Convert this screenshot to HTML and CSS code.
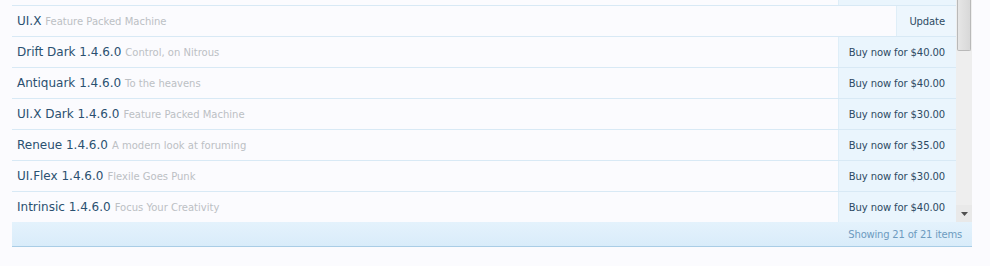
FILE: index.html
```html
<!DOCTYPE html>
<html>
<head>
<meta charset="utf-8">
<link rel="stylesheet" href="styles.css">
</head>
<body>
<div class="panel">
  <div class="viewport">
    <div class="list">
      <div class="row">
        <div class="info"></div>
        <div class="action buy blank"></div>
      </div>
      <div class="row">
        <div class="info"><span class="title">UI.X</span><span class="desc">Feature Packed Machine</span></div>
        <div class="action update">Update</div>
      </div>
      <div class="row">
        <div class="info"><span class="title">Drift Dark 1.4.6.0</span><span class="desc">Control, on Nitrous</span></div>
        <div class="action buy">Buy now for $40.00</div>
      </div>
      <div class="row">
        <div class="info"><span class="title">Antiquark 1.4.6.0</span><span class="desc">To the heavens</span></div>
        <div class="action buy">Buy now for $40.00</div>
      </div>
      <div class="row">
        <div class="info"><span class="title">UI.X Dark 1.4.6.0</span><span class="desc">Feature Packed Machine</span></div>
        <div class="action buy">Buy now for $30.00</div>
      </div>
      <div class="row">
        <div class="info"><span class="title">Reneue 1.4.6.0</span><span class="desc">A modern look at foruming</span></div>
        <div class="action buy">Buy now for $35.00</div>
      </div>
      <div class="row">
        <div class="info"><span class="title">UI.Flex 1.4.6.0</span><span class="desc">Flexile Goes Punk</span></div>
        <div class="action buy">Buy now for $30.00</div>
      </div>
      <div class="row">
        <div class="info"><span class="title">Intrinsic 1.4.6.0</span><span class="desc">Focus Your Creativity</span></div>
        <div class="action buy">Buy now for $40.00</div>
      </div>
    </div>
    <div class="scrollbar">
      <div class="thumb"></div>
      <div class="track"></div>
      <div class="arrow"><svg width="7" height="4" viewBox="0 0 7 4"><path d="M0 0H7L3.5 4Z" fill="#505050"/></svg></div>
    </div>
  </div>
  <div class="footer">Showing 21 of 21 items</div>
</div>
</body>
</html>
```
FILE: styles.css
```css
html, body {
  margin: 0;
  padding: 0;
  background: #fbfbfe;
  font-family: "DejaVu Sans", Verdana, sans-serif;
}
.panel {
  width: 960px;
  margin-left: 12px;
}
.viewport {
  display: flex;
  height: 222px;
  overflow: hidden;
}
.list {
  flex: 1;
  margin-top: -25px;
}
.row {
  display: flex;
  height: 30px;
  border-bottom: 1px solid #d8e9f5;
  background: #fbfbfe;
}
.info {
  flex: 1;
  display: flex;
  align-items: center;
  padding-left: 5px;
  white-space: nowrap;
}
.title {
  font-size: 12px;
  color: #2a5070;
}
.desc {
  margin-left: 4px;
  font-size: 10px;
  color: #bcc0c4;
}
.action {
  display: flex;
  align-items: center;
  justify-content: flex-end;
  padding: 0 11px 0 10px;
  font-size: 10px;
  letter-spacing: -0.1px;
  white-space: nowrap;
  color: #2d4a63;
  background: #eaf5fd;
  border-left: 1px solid #dfeef8;
}
.blank { width: 96px; }
.update { background: #edf6fd; padding-left: 12px; }
.scrollbar {
  width: 16px;
  display: flex;
  flex-direction: column;
  background: #eeeeee;
}
.thumb {
  height: 51px;
  margin: 0 1px;
  box-sizing: border-box;
  border: 1px solid #b9b9b9;
  border-top: none;
  border-radius: 0 0 2px 2px;
  background: linear-gradient(to right, #e6e6e6, #d8d8d8);
}
.track { flex: 1; }
.arrow {
  height: 17px;
  display: flex;
  justify-content: center;
  align-items: center;
  background: #e9e9e9;
}
.footer {
  height: 24px;
  border-bottom: 1px solid #a9cde6;
  background: linear-gradient(to bottom, #e4f2fc, #d9ecfa);
  display: flex;
  align-items: center;
  justify-content: flex-end;
  padding-right: 10px;
  font-size: 10px;
  letter-spacing: -0.2px;
  color: #6d9bbf;
}
```
